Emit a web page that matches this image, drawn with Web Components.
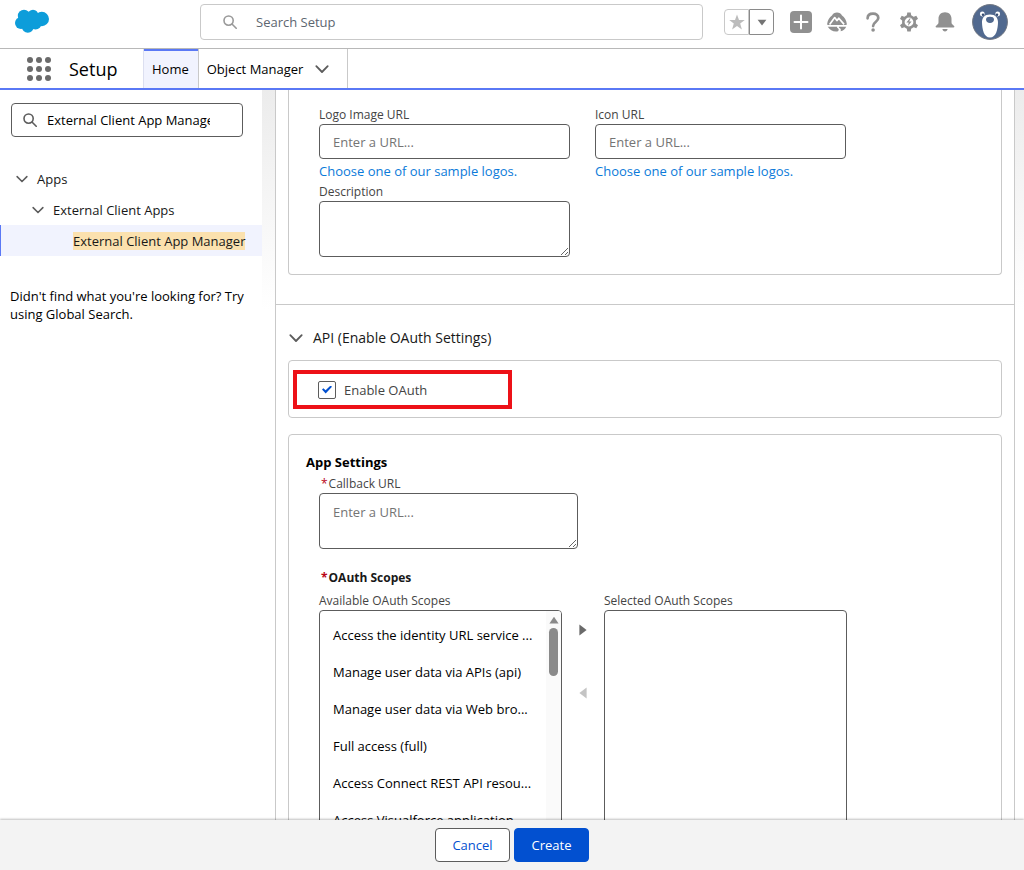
<!DOCTYPE html>
<html lang="en">
<head>
<meta charset="utf-8">
<meta name="viewport" content="width=device-width, initial-scale=1">
<title>External Client App Manager | Setup</title>
<style>
    :root {
        --text: #181818;
        --label: #444444;
        --muted: #747474;
        --border: #c9c9c9;
        --field: #5c5c5c;
        --accent: #5a78f5;
        --tint: #f1f3fe;
        --link: #0b7ad9;
        --brand: #0250d0;
        --icon: #909090;
    }
    body {
        margin: 0;
        font-family: "Open Sans", "Noto Sans", sans-serif;
        font-size: 13px;
        line-height: 18px;
        color: var(--text);
    }
</style>
</head>
<body>
<setup-page>
    <setup-header slot="header"></setup-header>
    <setup-nav slot="nav"></setup-nav>
    <setup-tree slot="side"></setup-tree>
    <form-card open-top>
        <field-grid>
            <text-field label="Logo Image URL" placeholder="Enter a URL..." link="Choose one of our sample logos."></text-field>
            <text-field label="Icon URL" placeholder="Enter a URL..." link="Choose one of our sample logos."></text-field>
            <text-field label="Description" multiline></text-field>
        </field-grid>
    </form-card>
    <form-section heading="API (Enable OAuth Settings)">
        <form-card>
            <check-field label="Enable OAuth"></check-field>
        </form-card>
        <form-card>
            <app-settings></app-settings>
        </form-card>
    </form-section>
    <action-bar slot="footer"></action-bar>
</setup-page>

<script>
const base = `
    *, :host {
        box-sizing: border-box;
    }
    :host {
        display: block;
    }
    button, input, textarea {
        font: inherit;
        color: inherit;
        margin: 0;
    }
    button {
        padding: 0;
        border: 0;
        background: none;
        cursor: pointer;
    }
    svg {
        display: block;
    }
`;

class BaseElement extends HTMLElement {
    constructor() {
        super();
        this.attachShadow({ mode: 'open' });
    }

    connectedCallback() {
        this.shadowRoot.innerHTML = `<style>${base}</style>` + this.render();
    }
}

const icons = {
    cloud: [34, 24, `<g fill="#0d9dda"><circle cx="9" cy="7" r="6.2"/><circle cx="18" cy="6" r="5.3"/><circle cx="26.8" cy="10" r="7.2"/><circle cx="6" cy="14" r="6"/><circle cx="12.8" cy="17.800" r="6"/><circle cx="20.5" cy="14.5" r="6"/><path d="M6 8h20v8H6z"/></g>`],
    search: [14, 14, `<g fill="none" stroke="currentColor" stroke-width="1.6" stroke-linecap="round"><circle cx="5.6" cy="5.6" r="4.6"/><path d="M9.2 9.2l4 4"/></g>`],
    chevron: [14, 14, `<path d="M1.3 4.2L7 10l5.7-5.8" fill="none" stroke="currentColor" stroke-width="1.8" stroke-linecap="round" stroke-linejoin="round"/>`],
    dots: [24, 24, `<g fill="#6a6a6a">${[3, 12, 21].map(y => [3, 12, 21].map(x => `<circle cx="${x}" cy="${y}" r="3"/>`).join('')).join('')}</g>`],
    star: [16, 16, `<path fill="#bcbcbc" d="M8 .4l2 5.6 5.8.1-4.6 3.5 1.7 5.8L8 12l-4.9 3.4 1.7-5.8L.2 6.1 6 6z"/>`],
    down: [10, 7, `<path fill="currentColor" d="M.6.8h8.8L5 6.6z"/>`],
    up: [10, 8, `<path fill="currentColor" d="M.4 7.6L5 .8l4.6 6.8z"/>`],
    right: [8, 12, `<path fill="currentColor" d="M.4.4L7.6 6 .4 11.6z"/>`],
    left: [8, 12, `<path fill="currentColor" d="M7.6.4L.4 6l7.2 5.6z"/>`],
    plus: [22, 22, `<rect width="22" height="22" rx="4" fill="currentColor"/><path d="M11 4.5v13M4.5 11h13" stroke="#fff" stroke-width="2" stroke-linecap="round"/>`],
    trail: [20, 20, `<path fill="currentColor" d="M10 .4c2.4 0 4.100 1.200 5 3.100 2.600 1.900 4.400 4.800 4.800 8.300.1.900-.3 1.200-1 1.200H1.200c-.7 0-1.100-.3-1-1.200C.6 8.300 2.400 5.400 5 3.500 5.900 1.600 7.600.4 10 .4z"/><path d="M2.600 12.400L7.700 5.600l2.200 3 1.900-2.400 5.300 6.200" fill="none" stroke="#fff" stroke-width="1.7" stroke-linejoin="round"/><path fill="currentColor" d="M.8 14.800h9.400c-.4.700.1 1.200.9 1.600.9.500.8 1.400-.1 2.900C6.700 20 3 18.600.8 14.800zM12 14.800h7.200c-1.200 2.400-3 3.900-5.600 4.500.5-1.500.3-2.300-.7-3-.8-.5-1.200-.9-.9-1.500z"/>`],
    help: [14, 20, `<path d="M1.600 6.300C1.700 3.300 3.900 1.700 7 1.700s5.300 1.700 5.300 4.400c0 3.700-5.200 3.600-5.200 8" fill="none" stroke="currentColor" stroke-width="2.700" stroke-linecap="round"/><circle cx="7.100" cy="18" r="1.800" fill="currentColor"/>`],
    gear: [20, 20, `<g fill="currentColor">${[0, 60, 120, 180, 240, 300].map(a => `<path d="M7.600 4.500L8.300.6h3.400l.7 3.900z" transform="rotate(${a} 10 10)"/>`).join('')}</g><circle cx="10" cy="10" r="5.700" fill="none" stroke="currentColor" stroke-width="2.600"/><path d="M10.900 6.300L7.400 10.600h2.300l-.8 3.300 3.700-4.500h-2.400l1.400-3.100z" fill="currentColor"/>`],
    bell: [20, 20, `<path fill="currentColor" d="M10 .3c4 0 6.500 2.800 6.500 6.400v3.500c0 1.400.7 2.100 1.800 3 .8.700 1.100 1 1.100 1.500s-.4.800-1 .8H1.600c-.6 0-1-.3-1-.8s.3-.8 1.100-1.500c1.100-.9 1.800-1.600 1.800-3V6.700C3.500 3.100 6 .3 10 .3zM7.400 17h5.200c-.2 1.500-1.200 2.400-2.600 2.400S7.600 18.500 7.400 17z"/>`],
    avatar: [36, 36, `<circle cx="18" cy="18" r="17.400" fill="#51698f" stroke="#6f7580"/><g fill="#fff"><circle cx="10.300" cy="10" r="2.400"/><circle cx="25.700" cy="10" r="2.400"/><path d="M18 10.500c5.500 0 8.200 3.500 8 8.300-.2 6-1.700 14.800-8 14.800s-7.800-8.800-8-14.800c-.2-4.800 2.500-8.300 8-8.300z"/></g><g fill="#344a70"><circle cx="11" cy="10.700" r="1.300"/><circle cx="25" cy="10.700" r="1.300"/></g><path d="M14 15.500c0-2 1.600-2.700 4-2.700s4 .7 4 2.700-1.600 3.600-4 3.600-4-1.600-4-3.600z" fill="#51698f"/>`]
};

class SetupIcon extends BaseElement {
    render() {
        const [w, h, body] = icons[this.getAttribute('name')];
        const size = this.getAttribute('size') || w;
        return `
            <style>
                :host { flex: none; }
            </style>
            <svg width="${size}" height="${size * h / w}" viewBox="0 0 ${w} ${h}" aria-hidden="true">${body}</svg>
        `;
    }
}

class SetupPage extends BaseElement {
    render() {
        return `
            <style>
                :host {
                    display: flex;
                    flex-direction: column;
                    height: 100vh;
                    overflow: hidden;
                    background: #fff;
                }
                .body {
                    flex: 1;
                    min-height: 0;
                    display: grid;
                    grid-template-columns: 262px minmax(0, 1fr);
                }
                .main {
                    padding: 0 9px 0 13px;
                    overflow: hidden;
                    background: linear-gradient(#ececec, #fff 220px);
                }
                .panel {
                    min-height: 100%;
                    border: solid var(--border);
                    border-width: 0 1px;
                    background: #fff;
                }
                .panel ::slotted(form-card) {
                    margin: 0 12px 29px;
                }
            </style>
            <slot name="header"></slot>
            <slot name="nav"></slot>
            <div class="body">
                <slot name="side"></slot>
                <main class="main"><div class="panel"><slot></slot></div></main>
            </div>
            <slot name="footer"></slot>
        `;
    }
}

class SetupHeader extends BaseElement {
    render() {
        return `
            <style>
                :host {
                    display: grid;
                    grid-template-columns: 164px minmax(0, 1fr) 284px;
                    column-gap: 21px;
                    height: 49px;
                    padding: 4px 16px 8px 15px;
                    border-bottom: 1px solid #b8b8b8;
                }
                .logo {
                    padding-top: 5px;
                }
                .search {
                    display: flex;
                    align-items: center;
                    gap: 19px;
                    height: 36px;
                    padding: 0 22px;
                    border: 1px solid var(--border);
                    border-radius: 4px;
                    color: #999;
                }
                .search input {
                    flex: 1;
                    min-width: 0;
                    border: 0;
                    padding: 0;
                    outline: 0;
                }
                .search input::placeholder {
                    color: #5d6670;
                    opacity: 1;
                }
                .tools, .actions {
                    display: flex;
                    align-items: center;
                    justify-content: space-between;
                    height: 36px;
                    color: var(--icon);
                }
                .actions {
                    gap: 14px;
                }
                .actions button {
                    display: flex;
                    justify-content: center;
                    width: 22px;
                }
                .fav {
                    display: flex;
                }
                .fav button {
                    display: flex;
                    align-items: center;
                    justify-content: center;
                    width: 25px;
                    height: 26px;
                    border: 1px solid var(--border);
                    border-radius: 4px 0 0 4px;
                }
                .fav button + button {
                    border-color: #8a8a8a;
                    border-radius: 0 4px 4px 0;
                    color: #747474;
                }
            </style>
            <setup-icon class="logo" name="cloud"></setup-icon>
            <label class="search">
                <setup-icon name="search"></setup-icon>
                <input type="search" placeholder="Search Setup" aria-label="Search Setup">
            </label>
            <div class="tools">
                <div class="fav">
                    <button aria-label="Favorite"><setup-icon name="star"></setup-icon></button>
                    <button aria-label="Favorites list"><setup-icon name="down"></setup-icon></button>
                </div>
                <div class="actions">
                    <button aria-label="Global actions"><setup-icon name="plus"></setup-icon></button>
                    <button aria-label="Guidance center"><setup-icon name="trail"></setup-icon></button>
                    <button aria-label="Help"><setup-icon name="help"></setup-icon></button>
                    <button aria-label="Setup menu"><setup-icon name="gear"></setup-icon></button>
                    <button aria-label="Notifications"><setup-icon name="bell"></setup-icon></button>
                </div>
                <button aria-label="View profile"><setup-icon name="avatar"></setup-icon></button>
            </div>
        `;
    }
}

class SetupNav extends BaseElement {
    render() {
        return `
            <style>
                :host {
                    display: flex;
                    align-items: stretch;
                    height: 41px;
                    padding-left: 27px;
                    border-bottom: 2px solid var(--accent);
                    color: #000;
                }
                .launcher {
                    display: flex;
                    align-items: center;
                }
                .name {
                    display: flex;
                    align-items: center;
                    width: 92px;
                    padding-left: 18px;
                    font-size: 18px;
                }
                a {
                    display: flex;
                    align-items: center;
                    gap: 12px;
                    padding: 0 9px 0 8px;
                    border-right: 1px solid var(--border);
                    color: inherit;
                    text-decoration: none;
                }
                .active {
                    border-left: 1px solid #dcdff0;
                    background: linear-gradient(var(--accent) 2px, var(--tint) 2px);
                }
                .more {
                    padding-right: 18px;
                }
                .more setup-icon {
                    color: #5c5c5c;
                }
            </style>
            <button class="launcher" aria-label="App Launcher"><setup-icon name="dots"></setup-icon></button>
            <span class="name">Setup</span>
            <a class="active" href="#home">Home</a>
            <a class="more" href="#objects">Object Manager <setup-icon name="chevron"></setup-icon></a>
        `;
    }
}

class SetupTree extends BaseElement {
    render() {
        return `
            <style>
                .find {
                    display: flex;
                    align-items: center;
                    gap: 10px;
                    height: 34px;
                    margin: 13px 19px 26px 11px;
                    padding: 0 32px 0 11px;
                    border: 1px solid var(--field);
                    border-radius: 4px;
                    color: #5c5c5c;
                }
                .find input {
                    flex: 1;
                    min-width: 0;
                    border: 0;
                    padding: 0;
                    outline: 0;
                    color: #000;
                }
                ul {
                    margin: 0;
                    padding: 0;
                    list-style: none;
                }
                .row {
                    display: flex;
                    align-items: center;
                    gap: 9px;
                    width: 100%;
                    height: 31px;
                    padding-left: 16px;
                    text-align: left;
                }
                .row setup-icon {
                    color: #5c5c5c;
                }
                .second {
                    padding-left: 32px;
                }
                .current {
                    padding-left: 72px;
                    border-left: 1px solid var(--accent);
                    background: var(--tint);
                    color: inherit;
                    text-decoration: none;
                }
                mark {
                    background: #fbe1ae;
                    color: inherit;
                    white-space: nowrap;
                }
                p {
                    margin: 31px 10px 0;
                    color: #000;
                }
            </style>
            <label class="find">
                <setup-icon name="search"></setup-icon>
                <input type="text" value="External Client App Manager" aria-label="Quick Find">
            </label>
            <ul>
                <li><button class="row"><setup-icon name="chevron" size="12"></setup-icon>Apps</button>
                    <ul>
                        <li><button class="row second"><setup-icon name="chevron" size="12"></setup-icon>External Client Apps</button>
                            <ul>
                                <li><a class="row current" href="#manager"><mark>External Client App Manager</mark></a></li>
                            </ul>
                        </li>
                    </ul>
                </li>
            </ul>
            <p>Didn't find what you're looking for? Try using Global Search.</p>
        `;
    }
}

class FormCard extends BaseElement {
    render() {
        return `
            <style>
                :host {
                    border: 1px solid var(--border);
                    border-radius: 4px;
                    background: #fff;
                }
                :host([open-top]) {
                    border-top: 0;
                    border-radius: 0 0 4px 4px;
                }
            </style>
            <slot></slot>
        `;
    }
}

class FormSection extends BaseElement {
    render() {
        return `
            <style>
                :host {
                    padding: 0 12px;
                    border-top: 1px solid var(--border);
                }
                h2 {
                    margin: 0;
                    font-size: 14px;
                    font-weight: 400;
                    line-height: 20px;
                }
                h2 button {
                    display: flex;
                    align-items: center;
                    gap: 10px;
                    padding: 23px 0 12px 1px;
                }
                h2 setup-icon {
                    color: #5c5c5c;
                }
                .cards {
                    display: grid;
                    gap: 16px;
                }
            </style>
            <h2><button aria-expanded="true"><setup-icon name="chevron"></setup-icon>${this.getAttribute('heading')}</button></h2>
            <div class="cards"><slot></slot></div>
        `;
    }
}

class FieldGrid extends BaseElement {
    render() {
        return `
            <style>
                :host {
                    display: grid;
                    grid-template-columns: repeat(2, 251px);
                    gap: 3px 25px;
                    padding: 16px 30px 17px;
                }
            </style>
            <slot></slot>
        `;
    }
}

class TextField extends BaseElement {
    render() {
        const hint = this.getAttribute('placeholder') || '';
        const link = this.getAttribute('link');
        const control = this.hasAttribute('multiline')
            ? `<textarea id="field" placeholder="${hint}"></textarea>`
            : `<input id="field" type="text" placeholder="${hint}">`;
        return `
            <style>
                label {
                    display: block;
                    font-size: 12px;
                    color: var(--label);
                }
                :host([required]) label::before {
                    content: "*";
                    padding: 0 1px 0 2px;
                    color: #ba0517;
                }
                input, textarea {
                    display: block;
                    width: 100%;
                    height: 35px;
                    padding: 0 13px;
                    border: 1px solid var(--field);
                    border-radius: 4px;
                    background: #fff;
                }
                textarea {
                    height: 56px;
                    padding: 9px 13px;
                    resize: vertical;
                }
                ::placeholder {
                    color: var(--muted);
                    opacity: 1;
                }
                a {
                    display: block;
                    padding-top: 3px;
                    color: var(--link);
                    text-decoration: none;
                }
            </style>
            <label for="field">${this.getAttribute('label')}</label>
            ${control}
            ${link ? `<a href="#samples">${link}</a>` : ''}
        `;
    }
}

class CheckField extends BaseElement {
    render() {
        return `
            <style>
                :host {
                    padding: 9px 4px 8px;
                }
                label {
                    display: flex;
                    align-items: center;
                    gap: 8px;
                    width: 219px;
                    height: 39px;
                    padding-left: 21px;
                    border: 4px solid #ed1118;
                    color: var(--label);
                }
                input {
                    appearance: none;
                    display: grid;
                    place-items: center;
                    width: 18px;
                    height: 18px;
                    border: 1px solid var(--field);
                    border-radius: 2px;
                }
                input:checked::before {
                    content: "";
                    width: 10px;
                    height: 8px;
                    background: var(--brand);
                    clip-path: polygon(0 50%, 14% 34%, 36% 60%, 86% 0, 100% 16%, 37% 100%);
                }
            </style>
            <label><input type="checkbox" checked>${this.getAttribute('label')}</label>
        `;
    }
}

class AppSettings extends BaseElement {
    render() {
        return `
            <style>
                :host {
                    padding: 17px 17px 24px;
                }
                h3, h4 {
                    margin: 0;
                    font-size: 13px;
                    line-height: 20px;
                    font-weight: 700;
                    color: #000;
                }
                h4 {
                    padding: 20px 0 5px;
                    font-size: 12px;
                    line-height: 18px;
                    color: var(--text);
                }
                h4::before {
                    content: "*";
                    padding: 0 1px 0 2px;
                    color: #ba0517;
                }
                .fields {
                    padding: 3px 13px 0;
                }
                text-field {
                    width: 259px;
                }
            </style>
            <h3>App Settings</h3>
            <div class="fields">
                <text-field label="Callback URL" placeholder="Enter a URL..." multiline required></text-field>
                <h4>OAuth Scopes</h4>
                <dual-list></dual-list>
            </div>
        `;
    }
}

const scopes = [
    'Access the identity URL service ...',
    'Manage user data via APIs (api)',
    'Manage user data via Web bro...',
    'Full access (full)',
    'Access Connect REST API resou...',
    'Access Visualforce application...'
];

class DualList extends BaseElement {
    render() {
        return `
            <style>
                :host {
                    display: flex;
                }
                .label {
                    font-size: 12px;
                    color: var(--label);
                    white-space: nowrap;
                }
                .column {
                    width: 243px;
                }
                .box {
                    display: flex;
                    height: 260px;
                    border: 1px solid var(--field);
                    border-radius: 4px;
                    overflow: hidden;
                }
                ul {
                    flex: 1;
                    min-width: 0;
                    margin: 0;
                    padding: 6px 0 6px 13px;
                    list-style: none;
                    color: #000;
                }
                li {
                    line-height: 37px;
                    white-space: nowrap;
                }
                .scroll {
                    display: flex;
                    flex-direction: column;
                    align-items: center;
                    gap: 4px;
                    width: 15px;
                    padding-top: 5px;
                    background: #fafafa;
                    color: #8a8a8a;
                }
                .thumb {
                    width: 9px;
                    height: 48px;
                    border-radius: 5px;
                    background: #8a8a8a;
                }
                .move {
                    display: flex;
                    flex-direction: column;
                    align-items: center;
                    gap: 51px;
                    width: 42px;
                    padding-top: 32px;
                    color: #6a6a6a;
                }
                button:disabled {
                    color: #c4c4c4;
                }
            </style>
            <div class="column">
                <div class="label" id="available">Available OAuth Scopes</div>
                <div class="box">
                    <ul role="listbox" aria-labelledby="available">
                        ${scopes.map(scope => `<li role="option">${scope}</li>`).join('')}
                    </ul>
                    <div class="scroll"><setup-icon name="up"></setup-icon><div class="thumb"></div></div>
                </div>
            </div>
            <div class="move">
                <button aria-label="Add"><setup-icon name="right"></setup-icon></button>
                <button aria-label="Remove" disabled><setup-icon name="left"></setup-icon></button>
            </div>
            <div class="column">
                <div class="label" id="selected">Selected OAuth Scopes</div>
                <div class="box"><ul role="listbox" aria-labelledby="selected"></ul></div>
            </div>
        `;
    }
}

class ActionBar extends BaseElement {
    render() {
        return `
            <style>
                :host {
                    display: flex;
                    justify-content: center;
                    gap: 4px;
                    padding: 8px;
                    background: #f3f3f3;
                    box-shadow: 0 -1px 2px rgba(0, 0, 0, 0.25);
                    z-index: 1;
                }
                button {
                    min-width: 75px;
                    height: 34px;
                    border: 1px solid var(--field);
                    border-radius: 4px;
                    background: #fff;
                    color: var(--brand);
                }
                .primary {
                    border-color: var(--brand);
                    background: var(--brand);
                    color: #fff;
                }
            </style>
            <button>Cancel</button>
            <button class="primary">Create</button>
        `;
    }
}

customElements.define('setup-icon', SetupIcon);
customElements.define('setup-page', SetupPage);
customElements.define('setup-header', SetupHeader);
customElements.define('setup-nav', SetupNav);
customElements.define('setup-tree', SetupTree);
customElements.define('form-card', FormCard);
customElements.define('form-section', FormSection);
customElements.define('field-grid', FieldGrid);
customElements.define('text-field', TextField);
customElements.define('check-field', CheckField);
customElements.define('app-settings', AppSettings);
customElements.define('dual-list', DualList);
customElements.define('action-bar', ActionBar);
</script>
</body>
</html>
